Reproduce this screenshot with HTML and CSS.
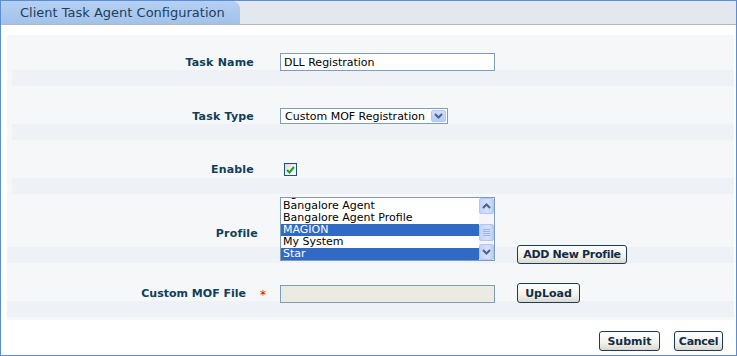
FILE: index.html
```html
<!DOCTYPE html>
<html>
<head>
    <title>Client Task Agent Configuration</title>
    <link rel="stylesheet" href="styles.css">
</head>
<body>
    <div class="frame">
        <div class="tab-bar">
            <div class="tab">Client Task Agent Configuration</div>
        </div>

        <div class="content">
            <div class="panel">
                <div class="row row-name inset">
                    <label class="field-label">Task Name</label>
                    <span></span>
                    <input type="text" class="text-input" value="DLL Registration">
                </div>

                <div class="row row-type inset">
                    <label class="field-label">Task Type</label>
                    <span></span>
                    <div class="dropdown">
                        <span>Custom MOF Registration</span>
                        <span class="drop-btn">
                            <svg width="9" height="6" viewBox="0 0 9 6"><path d="M1 1l3.5 3.5L8 1" fill="none" stroke="#4d6185" stroke-width="2"/></svg>
                        </span>
                    </div>
                </div>

                <div class="row row-enable inset">
                    <label class="field-label">Enable</label>
                    <span></span>
                    <span class="checkbox">
                        <svg width="9" height="8" viewBox="0 0 9 8"><path d="M1 4l2.5 2.5L8 1" fill="none" stroke="#21a121" stroke-width="2"/></svg>
                    </span>
                </div>

                <div class="row row-profile">
                    <label class="field-label">Profile</label>
                    <span></span>
                    <div class="listbox">
                        <div class="list-items">
                            <div class="list-item">Agent</div>
                            <div class="list-item">Bangalore Agent</div>
                            <div class="list-item">Bangalore Agent Profile</div>
                            <div class="list-item selected">MAGION</div>
                            <div class="list-item">My System</div>
                            <div class="list-item selected">Star</div>
                        </div>
                        <div class="scrollbar">
                            <span class="scroll-btn">
                                <svg width="9" height="6" viewBox="0 0 9 6"><path d="M1 5l3.5-3.5L8 5" fill="none" stroke="#4d6185" stroke-width="2"/></svg>
                            </span>
                            <span class="scroll-thumb">
                                <svg width="7" height="7" viewBox="0 0 7 7"><path d="M0 .5h7M0 2.5h7M0 4.5h7M0 6.5h7" stroke="#9fb4e6" stroke-width="1"/></svg>
                            </span>
                            <span class="scroll-btn">
                                <svg width="9" height="6" viewBox="0 0 9 6"><path d="M1 1l3.5 3.5L8 1" fill="none" stroke="#4d6185" stroke-width="2"/></svg>
                            </span>
                        </div>
                    </div>
                    <span></span>
                    <button class="btn btn-profile">ADD New Profile</button>
                </div>

                <div class="row row-mof">
                    <label class="field-label">Custom MOF File</label>
                    <span class="required">*</span>
                    <input type="text" class="text-input disabled" disabled>
                    <span></span>
                    <button class="btn btn-upload">UpLoad</button>
                </div>
            </div>

            <div class="actions">
                <button class="btn btn-submit">Submit</button>
                <button class="btn btn-cancel">Cancel</button>
            </div>
        </div>
    </div>
</body>
</html>
```

FILE: styles.css
```css
:root {
    --frame: #5b8dd6;
    --label: #113e59;
    --field-border: #7f9db9;
    --panel: #f5f7f9;
    --stripe: #eef2f6;
    --select: #316ac5;
}

body {
    margin: 0;
    font-family: 'DejaVu Sans', Verdana, sans-serif;
    font-size: 11px;
    background: #ffffff;
}

.frame {
    width: 737px;
    height: 356px;
    box-sizing: border-box;
    border: 1px solid var(--frame);
}

.tab-bar {
    height: 23px;
    background: #e3e8ef;
    border-bottom: 1px solid #b4bcae;
}

.tab {
    width: 220px;
    height: 23px;
    padding-left: 19px;
    line-height: 24px;
    font-size: 13px;
    color: #1b3e5a;
    background: linear-gradient(#b5d0f2, #a2c2eb);
    border-top-right-radius: 8px;
    white-space: nowrap;
}

.content {
    padding: 10px 2px 0 6px;
}

.panel {
    background: var(--panel);
    padding-bottom: 3px;
}

.row {
    display: grid;
    grid-template-columns: 251px 22px 215px 22px auto;
    align-items: center;
    align-content: start;
    box-sizing: border-box;
    background: linear-gradient(var(--stripe), var(--stripe)) no-repeat left bottom / 100% 16px;
}

.row.inset {
    background-position: 5px bottom;
}

.row-name {
    height: 51px;
    padding-top: 18px;
}

.row-type {
    height: 54px;
    padding-top: 22px;
}

.row-enable {
    height: 54px;
    padding-top: 23px;
}

.row-profile {
    height: 69px;
    padding-top: 3px;
}

.row-mof {
    height: 54px;
    padding-top: 20px;
}

.field-label {
    font-weight: bold;
    color: var(--label);
    text-align: right;
    padding-right: 4px;
    letter-spacing: 0.2px;
}

.row-profile .field-label {
    padding-right: 0;
    margin-top: 8px;
}

.row-mof .field-label {
    padding-right: 12px;
    letter-spacing: 0;
}

.required {
    color: #e00000;
    font-size: 12px;
    padding-left: 2px;
    padding-top: 3px;
}

.text-input {
    width: 215px;
    height: 18px;
    box-sizing: border-box;
    margin: 0;
    padding: 0 3px;
    border: 1px solid var(--field-border);
    font-family: inherit;
    font-size: 11px;
    color: #000;
    background: #fff;
}

.text-input.disabled {
    background: #ebebe4;
    margin-top: 1px;
}

.dropdown {
    width: 168px;
    height: 16px;
    box-sizing: border-box;
    border: 1px solid var(--field-border);
    background: #fff;
    display: flex;
    align-items: center;
    justify-content: space-between;
    padding-left: 4px;
    padding-right: 1px;
    color: #000;
}

.drop-btn {
    width: 15px;
    height: 12px;
    border-radius: 2px;
    background: linear-gradient(#cfdcfb, #b7cbf8);
    border: 1px solid #b4c6f0;
    box-sizing: border-box;
    display: flex;
    align-items: center;
    justify-content: center;
}

.checkbox {
    width: 13px;
    height: 13px;
    box-sizing: border-box;
    margin-left: 4px;
    border: 1px solid #1c5180;
    background: linear-gradient(135deg, #dcdcd7, #ffffff);
    display: flex;
    align-items: center;
    justify-content: center;
}

.listbox {
    width: 215px;
    height: 64px;
    box-sizing: border-box;
    border: 1px solid var(--field-border);
    background: #fff;
    display: flex;
    overflow: hidden;
}

.list-items {
    flex: 1;
    margin-top: -10px;
}

.list-item {
    height: 12px;
    line-height: 12px;
    padding-left: 2px;
    color: #000;
    white-space: nowrap;
}

.list-item.selected {
    background: var(--select);
    color: #fff;
}

.scrollbar {
    width: 15px;
    background: #f3f5fb;
    display: flex;
    flex-direction: column;
    justify-content: space-between;
    align-items: center;
}

.scroll-btn,
.scroll-thumb {
    width: 15px;
    height: 16px;
    box-sizing: border-box;
    border: 1px solid #b4c6f0;
    border-radius: 2px;
    background: linear-gradient(90deg, #c3d4fb, #d5e1fc 60%, #bccff8);
    display: flex;
    align-items: center;
    justify-content: center;
}

.scroll-thumb {
    height: 17px;
    margin-top: 7px;
}

.btn {
    font-family: inherit;
    font-size: 11px;
    font-weight: bold;
    color: #102c4a;
    height: 19px;
    padding: 0;
    border: 1px solid #173b62;
    border-radius: 3px;
    background: linear-gradient(#ffffff, #f2f1ea 60%, #dcd9cc);
    cursor: pointer;
    justify-self: start;
    white-space: nowrap;
}

.btn-profile {
    width: 110px;
    align-self: end;
    margin-bottom: -3px;
    letter-spacing: -0.3px;
}

.btn-upload {
    width: 63px;
    height: 20px;
}

.btn-submit {
    width: 61px;
}

.btn-cancel {
    width: 49px;
    letter-spacing: -0.3px;
}

.actions {
    display: flex;
    justify-content: flex-end;
    gap: 14px;
    padding: 11px 11px 0 0;
}

.actions .btn {
    height: 20px;
}
```
